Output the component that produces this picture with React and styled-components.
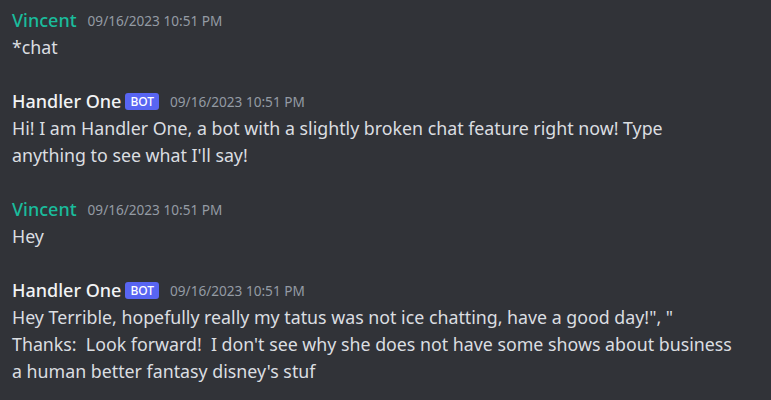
import React from 'react';
import styled, { createGlobalStyle } from 'styled-components';

const GlobalStyle = createGlobalStyle`
  html, body {
    margin: 0;
    padding: 0;
    background: #313338;
  }
  body {
    font-family: "Noto Sans", "Open Sans", sans-serif;
  }
`;

const ChatLog = styled.div`
  width: 771px;
  height: 400px;
  overflow: hidden;
  background: #313338;
  padding: 6px 12px 0;
  box-sizing: border-box;
  display: flex;
  flex-direction: column;
  gap: 26px;
`;

const MessageGroup = styled.div`
  display: flex;
  flex-direction: column;
`;

const Header = styled.div`
  display: flex;
  align-items: center;
  height: 28px;
`;

const Username = styled.span`
  font-size: 18px;
  font-weight: 500;
  color: ${(props) => props.$color || '#f2f3f5'};
`;

const BotTag = styled.span`
  margin-left: 4px;
  background: #5865f2;
  color: #ffffff;
  font-size: 12px;
  font-weight: 500;
  line-height: 17px;
  height: 17px;
  padding: 0 5px;
  border-radius: 3px;
`;

const Timestamp = styled.span`
  margin-left: 11px;
  font-size: 13.6px;
  color: #949ba4;
`;

const Body = styled.div`
  font-size: 17.8px;
  line-height: 27px;
  color: #dbdee1;
  white-space: pre-wrap;
`;

const messages = [
  { user: 'Vincent', color: '#1abc9c', text: '*chat' },
  {
    user: 'Handler One',
    bot: true,
    text: "Hi! I am Handler One, a bot with a slightly broken chat feature right now! Type\nanything to see what I'll say!",
  },
  { user: 'Vincent', color: '#1abc9c', text: 'Hey' },
  {
    user: 'Handler One',
    bot: true,
    text: 'Hey Terrible, hopefully really my tatus was not ice chatting, have a good day!", "\nThanks:  Look forward!  I don\'t see why she does not have some shows about business\na human better fantasy disney\'s stuf',
  },
];

const App = () => (
  <>
    <GlobalStyle />
    <ChatLog>
      {messages.map((m, i) => (
        <MessageGroup key={i}>
          <Header>
            <Username $color={m.color}>{m.user}</Username>
            {m.bot && <BotTag>BOT</BotTag>}
            <Timestamp>09/16/2023 10:51 PM</Timestamp>
          </Header>
          <Body>{m.text}</Body>
        </MessageGroup>
      ))}
    </ChatLog>
  </>
);

export default App;
